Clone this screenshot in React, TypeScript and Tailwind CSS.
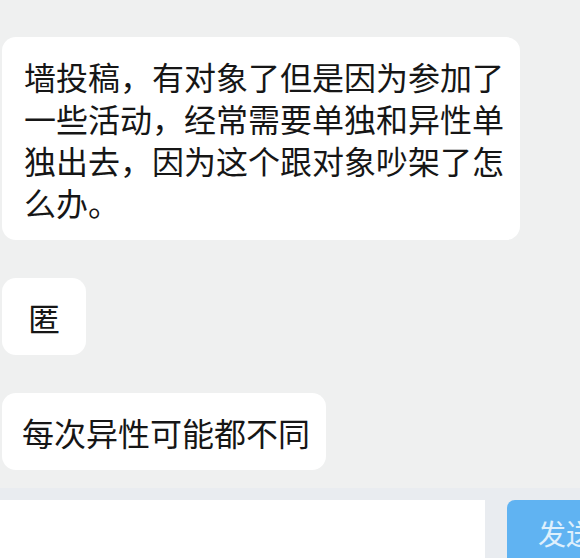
import React from 'react';

const messages = [
  '墙投稿，有对象了但是因为参加了一些活动，经常需要单独和异性单独出去，因为这个跟对象吵架了怎么办。',
];

function App() {
  return (
    <div
      className="h-[558px] w-[580px] overflow-hidden bg-[#eff0f0] flex flex-col text-[#161616]"
      style={{ fontFamily: '"Noto Sans CJK SC", "Noto Sans", sans-serif' }}
    >
      {/* Messages */}
      <div className="flex-1 flex flex-col items-start gap-[38px] pt-[37px] pl-[2px]">
        <div className="w-[518px] bg-white rounded-[14px] pl-[22px] pr-[16px] pt-[18px] pb-[17px] text-[32px] leading-[42px]">
          {messages[0]}
        </div>
        <div className="bg-white rounded-[14px] px-[26px] pt-[18px] pb-[17px] text-[32px] leading-[42px]">
          匿
        </div>
        <div className="bg-white rounded-[14px] pl-[20px] pr-[16px] pt-[18px] pb-[17px] text-[32px] leading-[42px]">
          每次异性可能都不同
        </div>
      </div>

      {/* Input bar */}
      <div className="h-[70px] bg-[#e9ecf0] flex items-end gap-[22px] pt-[12px]">
        <div className="w-[485px] h-[58px] shrink-0 bg-white" />
        <div className="w-[100px] h-[58px] shrink-0 bg-[#60b3f2] rounded-tl-[8px] pl-[31px] pt-[16px] text-[28px] leading-[34px] text-white/80 whitespace-nowrap">
          发送
        </div>
      </div>
    </div>
  );
}

export default App;
